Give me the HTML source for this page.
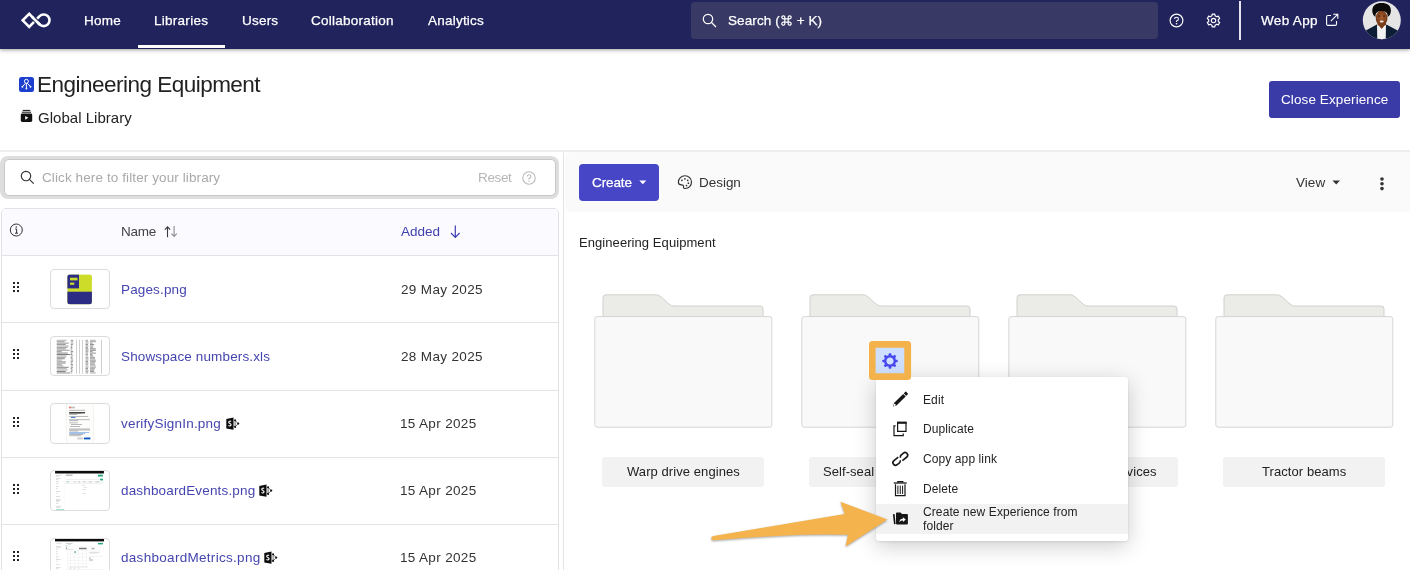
<!DOCTYPE html>
<html>
<head>
<meta charset="utf-8">
<title>Engineering Equipment</title>
<style>
*{box-sizing:border-box;margin:0;padding:0}
html,body{width:1410px;height:570px;overflow:hidden;background:#fff;-webkit-font-smoothing:antialiased;font-family:"Liberation Sans",sans-serif;color:#222}
.abs{position:absolute}
.t{position:absolute;white-space:nowrap;line-height:1;will-change:transform}
#nav{position:absolute;left:0;top:0;width:1410px;height:48.6px;background:#21245c;box-shadow:0 1px 4px rgba(0,0,0,.38)}
</style>
</head>
<body>
<div id="page" style="position:absolute;left:0;top:0;width:1410px;height:570px;overflow:hidden">
<!-- NAV -->
<div id="nav">
  <svg class="abs" style="left:18px;top:9px" width="36" height="22" viewBox="18 9 36 22"><g fill="none" stroke-width="2.6"><path d="M39.6 24.4 L29.2 13.9 L22.7 20.3 L29.2 26.8 L39.6 16.2 A5.8 5.8 0 1 1 39.6 24.4Z" stroke="#fff" stroke-linejoin="miter"/><path d="M33.6 18.4 L37.6 22.4" stroke="#21245c" stroke-width="4.6"/><path d="M40.2 25 L32 16.8" stroke="#fff"/></g></svg>
  <div class="abs" style="left:138px;top:45px;width:87px;height:3px;background:#fff"></div>
  <div class="abs" style="left:691px;top:2px;width:467px;height:37px;background:#393966;border-radius:4px"></div>
  <svg class="abs" style="left:702px;top:13px" width="15" height="15" viewBox="0 0 15 15"><circle cx="6" cy="6" r="4.7" fill="none" stroke="#fff" stroke-width="1.2"/><path d="M9.5 9.5 L14 14" stroke="#fff" stroke-width="1.2"/></svg>
  <svg class="abs" style="left:1168.7px;top:12.6px" width="15" height="15" viewBox="0 0 15 15"><circle cx="7.5" cy="7.5" r="6.4" fill="none" stroke="#fff" stroke-width="1.15"/><path d="M5.6 6.1 A1.9 1.9 0 1 1 7.5 8 V9" fill="none" stroke="#fff" stroke-width="1.1"/><circle cx="7.5" cy="10.8" r=".8" fill="#fff"/></svg>
  <svg class="abs" style="left:1206px;top:12.6px" width="15" height="15" viewBox="0 0 15 15"><path d="M9.10 2.87 L8.85 1.14 L6.15 1.14 L5.90 2.87 L4.29 3.80 L2.67 3.15 L1.32 5.49 L2.69 6.57 L2.69 8.43 L1.32 9.51 L2.67 11.85 L4.29 11.20 L5.90 12.13 L6.15 13.86 L8.85 13.86 L9.10 12.13 L10.71 11.20 L12.33 11.85 L13.68 9.51 L12.31 8.43 L12.31 6.57 L13.68 5.49 L12.33 3.15 L10.71 3.80Z" fill="none" stroke="#fff" stroke-width="1.15" stroke-linejoin="round"/><circle cx="7.5" cy="7.5" r="2.2" fill="none" stroke="#fff" stroke-width="1.15"/></svg>
  <div class="abs" style="left:1239.4px;top:1px;width:1.7px;height:38.5px;background:#e4e4ef"></div>
  <svg class="abs" style="left:1325.2px;top:13px" width="14" height="14" viewBox="0 0 14 14"><path d="M6 2.5 H3 Q1.6 2.5 1.6 3.9 V11 Q1.6 12.4 3 12.4 H10.1 Q11.5 12.4 11.5 11 V8" fill="none" stroke="#fff" stroke-width="1.1"/><path d="M5.8 8.2 L12.6 1.4 M8.2 1.2 H12.8 V5.8" fill="none" stroke="#fff" stroke-width="1.1"/></svg>
  <svg class="abs" style="left:1362px;top:0px" width="40" height="41" viewBox="1362 0 40 41"><defs><clipPath id="av"><circle cx="1381.8" cy="20.2" r="19"/></clipPath><radialGradient id="fg" cx=".5" cy=".45" r=".6"><stop offset="0" stop-color="#a85c2e"/><stop offset="1" stop-color="#6b3516"/></radialGradient></defs><g clip-path="url(#av)"><rect x="1362" y="0" width="40" height="41" fill="#e5e5e5"/><path d="M1377.6 22 H1386 V28 H1377.6Z" fill="#7a3d1a"/><ellipse cx="1381.6" cy="18" rx="5.9" ry="7.6" fill="url(#fg)"/><path d="M1372.3 11 C1372 5.5 1376 2.9 1381.6 2.9 C1387.2 2.9 1391.2 5.5 1390.9 11 C1390.8 13.8 1389.5 16 1387.6 17 C1388 13.5 1386.5 11 1381.6 11 C1376.7 11 1375.2 13.5 1375.6 17 C1373.7 16 1372.4 13.8 1372.3 11Z" fill="#0b0b0b"/><ellipse cx="1379.2" cy="16" rx="1.2" ry=".6" fill="#3a1a0c"/><ellipse cx="1384" cy="16" rx="1.2" ry=".6" fill="#3a1a0c"/><ellipse cx="1381.7" cy="21.4" rx="2" ry="1" fill="#f0e4de"/><path d="M1362 41 L1364 31.5 L1376.8 24.6 L1381.7 36 L1386.4 24.6 L1399.5 31.5 L1402 41Z" fill="#0e1d36"/><path d="M1377 25 L1379 25.8 L1381.7 28.5 L1384.2 25.8 L1386 25 L1385.7 41 L1377.3 41Z" fill="#f3f3f3"/><path d="M1379 25.5 L1381.7 29 L1384.3 25.5 L1384.3 24 H1379Z" fill="#7a3d1a"/></g></svg>
</div>
<div class="t" id="n6" style="left:728px;top:13.7px;font-size:13.5px;-webkit-text-stroke:.25px #fff;letter-spacing:.1px;color:#fff">Search (<svg width="11" height="11" viewBox="0 0 11 11" style="vertical-align:-1px;margin:0 1px"><path d="M3.8 3.8 H7.2 V7.2 H3.8Z M3.8 3.8 V2.6 A1.5 1.5 0 1 0 2.6 3.8Z M7.2 3.8 H8.4 A1.5 1.5 0 1 0 7.2 2.6Z M7.2 7.2 V8.4 A1.5 1.5 0 1 0 8.4 7.2Z M3.8 7.2 H2.6 A1.5 1.5 0 1 0 3.8 8.4Z" fill="none" stroke="#fff" stroke-width="1.2"/></svg> + K)</div>
<!-- HEADER -->
<div class="abs" style="left:19px;top:77px;width:15px;height:15px;background:#1c3fd0;border-radius:2.5px"></div>
<svg class="abs" style="left:19px;top:77px" width="15" height="15" viewBox="0 0 15 15"><g fill="none" stroke="#fff" stroke-width="1"><circle cx="7.4" cy="4.3" r="2"/><path d="M7.4 6.3 V11 M6.6 6.2 L3.6 9.4 M8.2 6.2 L11.3 9.4"/></g><g fill="#fff"><circle cx="3.4" cy="9.8" r=".95"/><circle cx="7.4" cy="11.6" r=".95"/><circle cx="11.5" cy="9.8" r=".95"/></g></svg>
<svg class="abs" style="left:20px;top:109px" width="13" height="14" viewBox="0 0 13 14"><path d="M2.8 1.4 H10.2 M1.9 3.2 H11.1" stroke="#111" stroke-width="1"/><rect x=".8" y="4.6" width="11.4" height="8.4" rx="1.4" fill="#111"/><path d="M5.2 6.9 L8.3 8.8 L5.2 10.7Z" fill="#fff"/></svg>
<div class="abs" style="left:1269px;top:81px;width:131px;height:37px;background:#3b3ba8;border-radius:3px"></div>
<div class="abs" style="left:0;top:150px;width:1410px;height:2px;background:#eee"></div>
<!-- LEFT PANEL -->
<div class="abs" style="left:563.2px;top:152px;width:1.3px;height:418px;background:#e4e4e4"></div>
<div class="abs" style="left:0px;top:156px;width:559.4px;height:43.2px;background:#dedede;border-radius:8px"></div>
<div class="abs" style="left:4.2px;top:159.3px;width:551.6px;height:36.4px;background:#fff;border:1px solid #c8c8c8;border-radius:5px"></div>
<svg class="abs" style="left:20px;top:170px" width="15" height="15" viewBox="0 0 15 15"><circle cx="6" cy="6" r="4.7" fill="none" stroke="#333" stroke-width="1.15"/><path d="M9.4 9.4 L13.7 13.7" stroke="#333" stroke-width="1.15"/></svg>
<svg class="abs" style="left:522px;top:171px" width="14" height="14" viewBox="0 0 14 14"><circle cx="7" cy="7" r="6.2" fill="none" stroke="#b9b9b9" stroke-width="1.1"/><path d="M5.2 5.6 A1.8 1.8 0 1 1 7 7.4 V8.4" fill="none" stroke="#b9b9b9" stroke-width="1.1"/><circle cx="7" cy="10.2" r=".7" fill="#b9b9b9"/></svg>
<div class="abs" id="tbl" style="left:1px;top:208px;width:558px;height:370px;border:1px solid #e2e2e6;border-radius:5px 5px 0 0;background:#fff;overflow:hidden">
  <div class="abs" style="left:0;top:0;width:557px;height:47px;background:#fafaff;border-bottom:1px solid #e2e2e6"></div>
  <div class="abs" style="left:0;top:113px;width:557px;height:1px;background:#e4e4e4"></div>
  <div class="abs" style="left:0;top:181px;width:557px;height:1px;background:#e4e4e4"></div>
  <div class="abs" style="left:0;top:248px;width:557px;height:1px;background:#e4e4e4"></div>
  <div class="abs" style="left:0;top:315px;width:557px;height:1px;background:#e4e4e4"></div>
</div>
<svg class="abs" style="left:8.8px;top:222.5px" width="15" height="15" viewBox="0 0 15 15"><circle cx="7.3" cy="7" r="6" fill="none" stroke="#333" stroke-width="1"/><path d="M6.2 6 H7.6 V10 M6 10.2 H9" fill="none" stroke="#333" stroke-width="1"/><circle cx="7.3" cy="4" r=".8" fill="#333"/></svg>
<svg class="abs" style="left:160px;top:222px" width="22" height="20" viewBox="160 222 22 20"><path d="M167.5 237.2 V227.6" stroke="#3a3a3a" stroke-width="1.1"/><path d="M164.9 229.7 L167.5 226.9 L170.1 229.7" fill="none" stroke="#3a3a3a" stroke-width="1.1"/><path d="M174.1 226.1 V235.8" stroke="#8c8c8c" stroke-width="1.1"/><path d="M171.4 233.7 L174.1 236.5 L176.8 233.7" fill="none" stroke="#8c8c8c" stroke-width="1.1"/></svg>
<svg class="abs" style="left:449px;top:224px" width="13" height="15" viewBox="0 0 13 15"><path d="M6.3 1.5 V13 M2 9 L6.3 13.4 L10.6 9" fill="none" stroke="#3f3fb0" stroke-width="1.2"/></svg>
<svg class="abs" style="left:13.2px;top:282px" width="6" height="10" viewBox="0 0 6 10" fill="#222"><rect x="0" y="0" width="2" height="2"/><rect x="0" y="4" width="2" height="2"/><rect x="0" y="8" width="2" height="2"/><rect x="4" y="0" width="2" height="2"/><rect x="4" y="4" width="2" height="2"/><rect x="4" y="8" width="2" height="2"/></svg>
<div class="abs" id="th0" style="left:50px;top:268.7px;width:59.6px;height:40.6px;border:1px solid #dcdcdc;border-radius:4px;background:#fff;overflow:hidden"><svg width="60" height="41" viewBox="50 268.7 60 41" style="position:absolute;left:-1px;top:-1px"><defs><clipPath id="pg"><rect x="67.4" y="274.2" width="24.5" height="29.7" rx="2.2"/></clipPath></defs><g clip-path="url(#pg)"><rect x="67" y="274" width="26" height="31" fill="#cddc29"/><rect x="67" y="274" width="12" height="14.1" fill="#2c2c84"/><rect x="67" y="291.4" width="26" height="13" fill="#2c2c84"/><rect x="70" y="277.4" width="7.5" height="2.7" fill="#cddc29"/><rect x="70" y="282.3" width="4.3" height="2.2" fill="#cddc29"/></g></svg></div>
<svg class="abs" style="left:13.2px;top:349.2px" width="6" height="10" viewBox="0 0 6 10" fill="#222"><rect x="0" y="0" width="2" height="2"/><rect x="0" y="4" width="2" height="2"/><rect x="0" y="8" width="2" height="2"/><rect x="4" y="0" width="2" height="2"/><rect x="4" y="4" width="2" height="2"/><rect x="4" y="8" width="2" height="2"/></svg>
<div class="abs" id="th1" style="left:50px;top:335.9px;width:59.6px;height:40.6px;border:1px solid #dcdcdc;border-radius:4px;background:#fff;overflow:hidden"><svg width="60" height="41" viewBox="50 335.9 60 41" style="position:absolute;left:-1px;top:-1px"><rect x="56.7" y="339.70" width="10" height="1.0" fill="#000" opacity="0.31"/><rect x="70.7" y="339.70" width="2.6" height="1.0" fill="#000" opacity="0.41"/><rect x="85.5" y="339.70" width="2.5" height="1.0" fill="#000" opacity="0.37"/><rect x="90" y="339.70" width="5.8" height="1.0" fill="#000" opacity="0.31"/><rect x="56.7" y="341.12" width="8" height="1.0" fill="#000" opacity="0.39"/><rect x="70.7" y="341.12" width="2.6" height="1.0" fill="#000" opacity="0.31"/><rect x="85.5" y="341.12" width="2.9" height="1.0" fill="#000" opacity="0.32"/><rect x="90" y="341.12" width="5.8" height="1.0" fill="#000" opacity="0.38"/><rect x="56.7" y="342.54" width="12" height="1.0" fill="#000" opacity="0.42"/><rect x="70.7" y="342.54" width="2.6" height="1.0" fill="#000" opacity="0.31"/><rect x="85.5" y="342.54" width="2.9" height="1.0" fill="#000" opacity="0.34"/><rect x="90" y="342.54" width="2.6" height="1.0" fill="#000" opacity="0.41"/><rect x="56.7" y="343.96" width="9" height="1.0" fill="#000" opacity="0.41"/><rect x="70.7" y="343.96" width="2.2" height="1.0" fill="#000" opacity="0.41"/><rect x="85.5" y="343.96" width="2.5" height="1.0" fill="#000" opacity="0.41"/><rect x="90" y="343.96" width="4.2" height="1.0" fill="#000" opacity="0.44"/><rect x="56.7" y="345.38" width="12" height="1.0" fill="#000" opacity="0.32"/><rect x="70.7" y="345.38" width="1.6" height="1.0" fill="#000" opacity="0.44"/><rect x="85.5" y="345.38" width="2.9" height="1.0" fill="#000" opacity="0.41"/><rect x="90" y="345.38" width="3.2" height="1.0" fill="#000" opacity="0.42"/><rect x="56.7" y="346.80" width="11" height="1.0" fill="#000" opacity="0.39"/><rect x="70.7" y="346.80" width="1.6" height="1.0" fill="#000" opacity="0.48"/><rect x="85.5" y="346.80" width="2.5" height="1.0" fill="#000" opacity="0.37"/><rect x="90" y="346.80" width="3.2" height="1.0" fill="#000" opacity="0.35"/><rect x="56.7" y="348.22" width="9" height="1.0" fill="#000" opacity="0.41"/><rect x="70.7" y="348.22" width="1.6" height="1.0" fill="#000" opacity="0.41"/><rect x="85.5" y="348.22" width="2.9" height="1.0" fill="#000" opacity="0.48"/><rect x="90" y="348.22" width="5.8" height="1.0" fill="#000" opacity="0.45"/><rect x="56.7" y="349.64" width="13" height="1.0" fill="#000" opacity="0.40"/><rect x="70.7" y="349.64" width="1.6" height="1.0" fill="#000" opacity="0.33"/><rect x="85.5" y="349.64" width="2.9" height="1.0" fill="#000" opacity="0.37"/><rect x="90" y="349.64" width="5.8" height="1.0" fill="#000" opacity="0.49"/><rect x="56.7" y="351.06" width="5" height="1.0" fill="#000" opacity="0.41"/><rect x="70.7" y="351.06" width="2.6" height="1.0" fill="#000" opacity="0.48"/><rect x="85.5" y="351.06" width="2.9" height="1.0" fill="#000" opacity="0.36"/><rect x="90" y="351.06" width="2.6" height="1.0" fill="#000" opacity="0.44"/><rect x="56.7" y="352.48" width="11" height="1.0" fill="#000" opacity="0.47"/><rect x="70.7" y="352.48" width="1.6" height="1.0" fill="#000" opacity="0.49"/><rect x="85.5" y="352.48" width="2.5" height="1.0" fill="#000" opacity="0.39"/><rect x="90" y="352.48" width="5.8" height="1.0" fill="#000" opacity="0.43"/><rect x="56.7" y="353.90" width="13.4" height="1.0" fill="#000" opacity="0.50"/><rect x="70.7" y="353.90" width="1.6" height="1.0" fill="#000" opacity="0.46"/><rect x="85.5" y="353.90" width="2.5" height="1.0" fill="#000" opacity="0.36"/><rect x="90" y="353.90" width="2.6" height="1.0" fill="#000" opacity="0.38"/><rect x="56.7" y="355.32" width="10" height="1.0" fill="#000" opacity="0.33"/><rect x="70.7" y="355.32" width="2.6" height="1.0" fill="#000" opacity="0.32"/><rect x="85.5" y="355.32" width="2.5" height="1.0" fill="#000" opacity="0.31"/><rect x="90" y="355.32" width="3.2" height="1.0" fill="#000" opacity="0.45"/><rect x="56.7" y="356.74" width="9" height="1.0" fill="#000" opacity="0.38"/><rect x="70.7" y="356.74" width="1.6" height="1.0" fill="#000" opacity="0.47"/><rect x="85.5" y="356.74" width="2.9" height="1.0" fill="#000" opacity="0.32"/><rect x="90" y="356.74" width="5" height="1.0" fill="#000" opacity="0.39"/><rect x="56.7" y="358.16" width="8" height="1.0" fill="#000" opacity="0.47"/><rect x="70.7" y="358.16" width="2.2" height="1.0" fill="#000" opacity="0.36"/><rect x="85.5" y="358.16" width="2.9" height="1.0" fill="#000" opacity="0.38"/><rect x="90" y="358.16" width="5" height="1.0" fill="#000" opacity="0.37"/><rect x="56.7" y="359.58" width="5" height="1.0" fill="#000" opacity="0.34"/><rect x="70.7" y="359.58" width="2.6" height="1.0" fill="#000" opacity="0.35"/><rect x="85.5" y="359.58" width="2.9" height="1.0" fill="#000" opacity="0.35"/><rect x="90" y="359.58" width="5.8" height="1.0" fill="#000" opacity="0.40"/><rect x="56.7" y="361.00" width="9" height="1.0" fill="#000" opacity="0.33"/><rect x="70.7" y="361.00" width="2.2" height="1.0" fill="#000" opacity="0.41"/><rect x="85.5" y="361.00" width="2.5" height="1.0" fill="#000" opacity="0.42"/><rect x="90" y="361.00" width="5.8" height="1.0" fill="#000" opacity="0.36"/><rect x="56.7" y="362.42" width="9" height="1.0" fill="#000" opacity="0.48"/><rect x="70.7" y="362.42" width="1.6" height="1.0" fill="#000" opacity="0.46"/><rect x="85.5" y="362.42" width="2.9" height="1.0" fill="#000" opacity="0.47"/><rect x="90" y="362.42" width="5" height="1.0" fill="#000" opacity="0.46"/><rect x="56.7" y="363.84" width="5" height="1.0" fill="#000" opacity="0.32"/><rect x="70.7" y="363.84" width="2.2" height="1.0" fill="#000" opacity="0.43"/><rect x="85.5" y="363.84" width="2.5" height="1.0" fill="#000" opacity="0.31"/><rect x="90" y="363.84" width="5" height="1.0" fill="#000" opacity="0.31"/><rect x="56.7" y="365.26" width="6.5" height="1.0" fill="#000" opacity="0.37"/><rect x="70.7" y="365.26" width="2.2" height="1.0" fill="#000" opacity="0.31"/><rect x="85.5" y="365.26" width="2.9" height="1.0" fill="#000" opacity="0.30"/><rect x="90" y="365.26" width="5.8" height="1.0" fill="#000" opacity="0.33"/><rect x="56.7" y="366.68" width="12" height="1.0" fill="#000" opacity="0.47"/><rect x="70.7" y="366.68" width="2.2" height="1.0" fill="#000" opacity="0.42"/><rect x="85.5" y="366.68" width="2.9" height="1.0" fill="#000" opacity="0.33"/><rect x="90" y="366.68" width="5.8" height="1.0" fill="#000" opacity="0.35"/><rect x="56.7" y="368.10" width="10" height="1.0" fill="#000" opacity="0.32"/><rect x="70.7" y="368.10" width="1.6" height="1.0" fill="#000" opacity="0.47"/><rect x="85.5" y="368.10" width="2.5" height="1.0" fill="#000" opacity="0.50"/><rect x="90" y="368.10" width="5" height="1.0" fill="#000" opacity="0.39"/><rect x="56.7" y="369.52" width="11" height="1.0" fill="#000" opacity="0.32"/><rect x="70.7" y="369.52" width="2.2" height="1.0" fill="#000" opacity="0.37"/><rect x="85.5" y="369.52" width="2.9" height="1.0" fill="#000" opacity="0.35"/><rect x="90" y="369.52" width="4.2" height="1.0" fill="#000" opacity="0.47"/><rect x="56.7" y="370.94" width="9" height="1.0" fill="#000" opacity="0.49"/><rect x="70.7" y="370.94" width="1.6" height="1.0" fill="#000" opacity="0.41"/><rect x="85.5" y="370.94" width="2.9" height="1.0" fill="#000" opacity="0.33"/><rect x="90" y="370.94" width="4.2" height="1.0" fill="#000" opacity="0.41"/><rect x="56.7" y="372.36" width="13.4" height="1.0" fill="#000" opacity="0.44"/><rect x="70.7" y="372.36" width="1.6" height="1.0" fill="#000" opacity="0.35"/><rect x="85.5" y="372.36" width="2.5" height="1.0" fill="#000" opacity="0.37"/><rect x="90" y="372.36" width="5.8" height="1.0" fill="#000" opacity="0.33"/><rect x="76.4" y="339.6" width="0.6" height="34.2" fill="#b0b0b0"/><rect x="79.2" y="339.6" width="0.6" height="34.2" fill="#b0b0b0"/><rect x="82.1" y="339.6" width="0.6" height="34.2" fill="#b0b0b0"/><rect x="101.4" y="339.6" width="0.6" height="34.2" fill="#b0b0b0"/></svg></div>
<svg class="abs" style="left:13.2px;top:416.6px" width="6" height="10" viewBox="0 0 6 10" fill="#222"><rect x="0" y="0" width="2" height="2"/><rect x="0" y="4" width="2" height="2"/><rect x="0" y="8" width="2" height="2"/><rect x="4" y="0" width="2" height="2"/><rect x="4" y="4" width="2" height="2"/><rect x="4" y="8" width="2" height="2"/></svg>
<div class="abs" id="th2" style="left:50px;top:403.1px;width:59.6px;height:40.6px;border:1px solid #dcdcdc;border-radius:4px;background:#fff;overflow:hidden"><svg width="60" height="41" viewBox="50 403.1 60 41" style="position:absolute;left:-1px;top:-1px"><rect x="66.2" y="403.1" width="27.2" height="41" fill="#fdfdfc" stroke="#ecebe6" stroke-width=".6"/><rect x="69.2" y="406.8" width="1.6" height="1.6" fill="#e3572b"/><rect x="70.9" y="406.8" width="4" height="1.6" fill="#bdbdbd"/><rect x="69.2" y="410" width="15.8" height="0.6" fill="#8c8c8c"/><rect x="69.2" y="412.4" width="15.8" height="0.6" fill="#8c8c8c"/><rect x="69.2" y="413.2" width="12" height="0.6" fill="#8c8c8c"/><rect x="69.2" y="414.5" width="8" height="0.6" fill="#8c8c8c"/><rect x="69.2" y="416.2" width="19" height="0.6" fill="#8c8c8c"/><rect x="69.2" y="419.6" width="20.8" height="0.6" fill="#8c8c8c"/><rect x="69.2" y="420.6" width="9" height="0.6" fill="#8c8c8c"/><rect x="69.2" y="422.7" width="8.5" height="0.6" fill="#8c8c8c"/><rect x="71" y="424.4" width="11" height="0.6" fill="#8c8c8c"/><rect x="70" y="426.2" width="10" height="0.6" fill="#8c8c8c"/><rect x="69.2" y="428.8" width="20.8" height="0.6" fill="#8c8c8c"/><rect x="69.2" y="429.8" width="20.8" height="0.6" fill="#8c8c8c"/><rect x="69.2" y="430.8" width="9" height="0.6" fill="#8c8c8c"/><rect x="69.2" y="434.4" width="14" height="0.6" fill="#8c8c8c"/><rect x="69.2" y="435.6" width="12" height="0.6" fill="#8c8c8c"/><rect x="69.2" y="412.2" width="15.8" height="1.3" fill="#3a3a3a"/><rect x="71" y="417.2" width="4.5" height=".9" fill="#2f6fd0"/><rect x="69.2" y="432.4" width="20" height=".7" fill="#7aa6e0"/><rect x="69.2" y="433.4" width="16" height=".7" fill="#7aa6e0"/><rect x="77.2" y="437.6" width="5.9" height="1.9" fill="#cfcfcf"/><rect x="84" y="437.6" width="6.4" height="1.9" fill="#0b5cc2"/></svg></div>
<svg class="abs" style="left:13.2px;top:483.6px" width="6" height="10" viewBox="0 0 6 10" fill="#222"><rect x="0" y="0" width="2" height="2"/><rect x="0" y="4" width="2" height="2"/><rect x="0" y="8" width="2" height="2"/><rect x="4" y="0" width="2" height="2"/><rect x="4" y="4" width="2" height="2"/><rect x="4" y="8" width="2" height="2"/></svg>
<div class="abs" id="th3" style="left:50px;top:470.3px;width:59.6px;height:40.6px;border:1px solid #dcdcdc;border-radius:4px;background:#fff;overflow:hidden"><svg width="60" height="41" viewBox="50 470.3 60 41" style="position:absolute;left:-1px;top:-1px"><rect x="55.1" y="471.1" width="48.8" height="2.7" fill="#0d0d0d"/><rect x="56" y="475.2" width="5.6" height="0.6" fill="#c9c9c9"/><rect x="56" y="476.1" width="3" height="0.6" fill="#c9c9c9"/><rect x="56" y="478.4" width="4.8" height="0.6" fill="#c9c9c9"/><rect x="56" y="479.4" width="2" height="0.6" fill="#c9c9c9"/><rect x="56" y="481.3" width="3" height="0.6" fill="#c9c9c9"/><rect x="56" y="483.3" width="2" height="0.6" fill="#c9c9c9"/><rect x="56" y="486.4" width="2.6" height="0.6" fill="#c9c9c9"/><rect x="56" y="488.2" width="2" height="0.6" fill="#c9c9c9"/><rect x="56" y="491.3" width="4.6" height="0.6" fill="#c9c9c9"/><rect x="56" y="493.2" width="1.5" height="0.6" fill="#c9c9c9"/><rect x="56" y="496.3" width="3.8" height="0.6" fill="#c9c9c9"/><rect x="56" y="499.5" width="4.7" height="0.6" fill="#c9c9c9"/><rect x="56" y="500.6" width="4.4" height="0.6" fill="#c9c9c9"/><rect x="56" y="501.6" width="3" height="0.6" fill="#c9c9c9"/><rect x="56" y="503.4" width="2.6" height="0.6" fill="#c9c9c9"/><rect x="56" y="506.2" width="5.5" height="0.6" fill="#c9c9c9"/><rect x="56" y="507.4" width="4" height="0.6" fill="#c9c9c9"/><rect x="64.6" y="473.8" width=".3" height="36.8" fill="#f0f0f0"/><rect x="66" y="475" width="6.5" height=".9" fill="#9a9a9a"/><rect x="98" y="475" width="4.9" height="1.8" fill="#27a87a"/><rect x="100.1" y="479" width="2.9" height="1.7" fill="#27a87a"/><rect x="66" y="479.5" width="33" height=".5" fill="#dedede"/><rect x="65" y="481.6" width="38.5" height="1.1" fill="#eef2f1"/><rect x="65" y="483.3" width="38.5" height=".4" fill="#dcdcdc"/><rect x="66.5" y="481.9" width="2.6" height=".6" fill="#6cc3a4"/><rect x="74" y="481.9" width="1.4" height="0.6" fill="#aaa"/><rect x="78" y="481.9" width="1.8" height="0.6" fill="#aaa"/><rect x="83" y="481.9" width="2.4" height="0.6" fill="#aaa"/><rect x="89" y="481.9" width="2.6" height="0.6" fill="#aaa"/><rect x="95.5" y="481.9" width="3.6" height="0.6" fill="#aaa"/><rect x="82" y="485.6" width="3.6" height="0.6" fill="#d4d4d4"/><rect x="83.5" y="487.6" width="3.6" height="0.6" fill="#d4d4d4"/><rect x="82.5" y="489.4" width="3.4" height="0.6" fill="#d4d4d4"/><rect x="82.4" y="493.3" width="3.6" height="0.6" fill="#d4d4d4"/><rect x="56" y="509.3" width="8" height=".8" fill="#8fd9bf"/></svg></div>
<svg class="abs" style="left:13.2px;top:550.8px" width="6" height="10" viewBox="0 0 6 10" fill="#222"><rect x="0" y="0" width="2" height="2"/><rect x="0" y="4" width="2" height="2"/><rect x="0" y="8" width="2" height="2"/><rect x="4" y="0" width="2" height="2"/><rect x="4" y="4" width="2" height="2"/><rect x="4" y="8" width="2" height="2"/></svg>
<div class="abs" id="th4" style="left:50px;top:537.5px;width:59.6px;height:40.6px;border:1px solid #dcdcdc;border-radius:4px;background:#fff;overflow:hidden"><svg width="60" height="41" viewBox="50 537.5 60 41" style="position:absolute;left:-1px;top:-1px"><rect x="55" y="538.3" width="49" height="2.6" fill="#0d0d0d"/><rect x="56" y="542.4" width="5.8" height="0.6" fill="#c9c9c9"/><rect x="56" y="545.4" width="4.8" height="0.6" fill="#c9c9c9"/><rect x="56" y="546.4" width="4.8" height="0.6" fill="#c9c9c9"/><rect x="56" y="548.2" width="2.2" height="0.6" fill="#c9c9c9"/><rect x="56" y="550.4" width="1.8" height="0.6" fill="#c9c9c9"/><rect x="56" y="552.5" width="2" height="0.6" fill="#c9c9c9"/><rect x="56" y="555.3" width="2.6" height="0.6" fill="#c9c9c9"/><rect x="56" y="557.2" width="1.5" height="0.6" fill="#c9c9c9"/><rect x="56" y="558.5" width="4.6" height="0.6" fill="#c9c9c9"/><rect x="56" y="560.4" width="1.4" height="0.6" fill="#c9c9c9"/><rect x="56" y="563.4" width="3.6" height="0.6" fill="#c9c9c9"/><rect x="56" y="566.9" width="4.6" height="0.6" fill="#c9c9c9"/><rect x="56" y="568" width="2.6" height="0.6" fill="#c9c9c9"/><rect x="66" y="542.6" width="6.6" height=".7" fill="#bdbdbd"/><rect x="68" y="543.6" width="3" height=".6" fill="#cfcfcf"/><rect x="98" y="542.4" width="5" height="1.5" fill="#27a87a"/><rect x="65.6" y="545.2" width="1.8" height=".6" fill="#6cc3a4"/><rect x="65.2" y="546.4" width="38.2" height="3.2" fill="none" stroke="#e9e9e9" stroke-width=".35"/><rect x="66.3" y="547.2" width=".8" height="1.2" fill="#555"/><rect x="66.5" y="548.8" width="6.5" height=".5" fill="#cfcfcf"/><rect x="79" y="547.3" width="7.6" height="1" fill="#5a5a5a"/><rect x="79" y="548.6" width="7.6" height=".5" fill="#bbb"/><rect x="91.6" y="547.4" width="3" height=".8" fill="#888"/><rect x="91.6" y="548.6" width="2.6" height=".5" fill="#ccc"/><rect x="74" y="551" width="2.1" height="1.1" fill="#27a87a"/><rect x="67.5" y="550" width=".3" height="16" fill="#e4e4e4"/><rect x="70.3" y="550" width=".3" height="16" fill="#e4e4e4"/><rect x="74.4" y="550" width=".3" height="16" fill="#e4e4e4"/><rect x="78.3" y="550" width=".3" height="16" fill="#e4e4e4"/><rect x="82.4" y="550" width=".3" height="16" fill="#e4e4e4"/><rect x="86.4" y="550" width=".3" height="16" fill="#e4e4e4"/><rect x="67.5" y="553.3" width="19.5" height=".3" fill="#e4e4e4"/><rect x="67.5" y="556.4" width="19.5" height=".3" fill="#e4e4e4"/><rect x="67.5" y="559.5" width="19.5" height=".3" fill="#e4e4e4"/><rect x="67.5" y="562.5" width="19.5" height=".3" fill="#e4e4e4"/><rect x="67.5" y="565.6" width="19.5" height=".3" fill="#e4e4e4"/><rect x="89" y="551.4" width="10.6" height=".5" fill="#b9b9b9"/><rect x="89.6" y="552.4" width="8" height=".5" fill="#d8d8d8"/><rect x="89" y="555.4" width="14" height=".4" fill="#dedede"/><rect x="89.2" y="557.2" width="1.4" height=".8" fill="#777"/><rect x="89.2" y="558.5" width="3.8" height=".6" fill="#b9b9b9"/><rect x="89.2" y="559.5" width="3.8" height=".6" fill="#b9b9b9"/><rect x="69" y="566.3" width="19" height=".5" fill="#d8d8d8"/><rect x="70.2" y="567.3" width=".9" height=".7" fill="#9a8fd6"/><rect x="74.2" y="567.3" width=".9" height=".7" fill="#b48ad0"/><rect x="78.4" y="567.3" width=".9" height=".7" fill="#e6a0bf"/><rect x="65.5" y="568.6" width="38" height=".4" fill="#e2e2e2"/></svg></div>
<svg class="abs" style="left:225.5px;top:417px" width="14" height="13" viewBox="0 0 14 13"><path d="M0.3 1.9 L7.5 0.4 V12.7 L0.3 11.5Z" fill="#0c0c0c"/><path d="M5.1 4.5 C4.2 3.7 2.7 4.1 2.7 5.2 C2.7 6.6 5.1 6.3 5.1 7.8 C5.1 9 3.4 9.3 2.5 8.4" fill="none" stroke="#fff" stroke-width="1.05"/><path d="M9.1 3.3 L12.2 6.6 L9.1 9.9Z" fill="none" stroke="#111" stroke-width=".6"/><circle cx="9.1" cy="3.3" r="1.05" fill="#111"/><circle cx="9.1" cy="9.9" r="1.05" fill="#111"/><circle cx="12.2" cy="6.6" r="1.1" fill="#111"/></svg>
<svg class="abs" style="left:259px;top:484.1px" width="14" height="13" viewBox="0 0 14 13"><path d="M0.3 1.9 L7.5 0.4 V12.7 L0.3 11.5Z" fill="#0c0c0c"/><path d="M5.1 4.5 C4.2 3.7 2.7 4.1 2.7 5.2 C2.7 6.6 5.1 6.3 5.1 7.8 C5.1 9 3.4 9.3 2.5 8.4" fill="none" stroke="#fff" stroke-width="1.05"/><path d="M9.1 3.3 L12.2 6.6 L9.1 9.9Z" fill="none" stroke="#111" stroke-width=".6"/><circle cx="9.1" cy="3.3" r="1.05" fill="#111"/><circle cx="9.1" cy="9.9" r="1.05" fill="#111"/><circle cx="12.2" cy="6.6" r="1.1" fill="#111"/></svg>
<svg class="abs" style="left:264px;top:551px" width="14" height="13" viewBox="0 0 14 13"><path d="M0.3 1.9 L7.5 0.4 V12.7 L0.3 11.5Z" fill="#0c0c0c"/><path d="M5.1 4.5 C4.2 3.7 2.7 4.1 2.7 5.2 C2.7 6.6 5.1 6.3 5.1 7.8 C5.1 9 3.4 9.3 2.5 8.4" fill="none" stroke="#fff" stroke-width="1.05"/><path d="M9.1 3.3 L12.2 6.6 L9.1 9.9Z" fill="none" stroke="#111" stroke-width=".6"/><circle cx="9.1" cy="3.3" r="1.05" fill="#111"/><circle cx="9.1" cy="9.9" r="1.05" fill="#111"/><circle cx="12.2" cy="6.6" r="1.1" fill="#111"/></svg>
<!-- RIGHT PANEL -->
<div class="abs" style="left:565.3px;top:152px;width:845px;height:60.2px;background:#fafafa;border-radius:7px 0 0 7px"></div>
<div class="abs" style="left:579px;top:163.5px;width:80px;height:37px;background:#4646c6;border-radius:4px"></div>
<svg class="abs" style="left:639px;top:180px" width="8" height="5" viewBox="0 0 8 5"><path d="M0.3 0.5 H7.3 L3.8 4.2Z" fill="#fff"/></svg>
<svg class="abs" style="left:676px;top:173px" width="18" height="18" viewBox="676 173 18 18"><path d="M685 175.7 C681.2 175.7 678.4 178.6 678.4 182.2 C678.4 184.2 680 184.9 681.6 184.9 C683.2 184.9 683.7 185.8 683.5 186.8 C683.3 188 684 188.5 685.2 188.5 C688.9 188.5 691.5 185.6 691.5 182.1 C691.5 178.5 688.7 175.7 685 175.7Z" fill="none" stroke="#333" stroke-width="1.15"/><g fill="#333"><circle cx="681.9" cy="180.3" r=".85"/><circle cx="684.9" cy="178.8" r=".85"/><circle cx="687.7" cy="180.3" r=".85"/><circle cx="688.4" cy="183.2" r=".85"/><circle cx="686.5" cy="185.6" r=".85"/></g></svg>
<svg class="abs" style="left:1332px;top:180px" width="9" height="5" viewBox="0 0 9 5"><path d="M0.5 0.5 H8 L4.2 4.4Z" fill="#333"/></svg>
<svg class="abs" style="left:1379px;top:177px" width="6" height="14" viewBox="0 0 6 14" fill="#333"><circle cx="3" cy="2" r="1.8"/><circle cx="3" cy="6.8" r="1.8"/><circle cx="3" cy="11.6" r="1.8"/></svg>
<svg class="abs" style="left:594.0px;top:293px" width="179" height="136" viewBox="0 0 179 136"><path d="M9 24 V4.8 Q9 1.8 12 1.8 H62 Q64.8 1.8 67 3.8 L75.2 11.2 Q77.2 13 80 13 H166 Q169 13 169 16 V24Z" fill="#ebebe8" stroke="#d0d0cd" stroke-width="1"/><rect x="0.8" y="23.6" width="177" height="110.6" rx="2.5" fill="#f9f9f9" stroke="#d6d6d6" stroke-width="1"/></svg>
<div class="abs" style="left:601.6px;top:457px;width:162.6px;height:30px;background:#f2f2f2;border-radius:3px"></div>
<svg class="abs" style="left:801.1px;top:293px" width="179" height="136" viewBox="0 0 179 136"><path d="M9 24 V4.8 Q9 1.8 12 1.8 H62 Q64.8 1.8 67 3.8 L75.2 11.2 Q77.2 13 80 13 H166 Q169 13 169 16 V24Z" fill="#ebebe8" stroke="#d0d0cd" stroke-width="1"/><rect x="0.8" y="23.6" width="177" height="110.6" rx="2.5" fill="#f9f9f9" stroke="#d6d6d6" stroke-width="1"/></svg>
<div class="abs" style="left:808.7px;top:457px;width:162.6px;height:30px;background:#f2f2f2;border-radius:3px"></div>
<svg class="abs" style="left:1008.2px;top:293px" width="179" height="136" viewBox="0 0 179 136"><path d="M9 24 V4.8 Q9 1.8 12 1.8 H62 Q64.8 1.8 67 3.8 L75.2 11.2 Q77.2 13 80 13 H166 Q169 13 169 16 V24Z" fill="#ebebe8" stroke="#d0d0cd" stroke-width="1"/><rect x="0.8" y="23.6" width="177" height="110.6" rx="2.5" fill="#f9f9f9" stroke="#d6d6d6" stroke-width="1"/></svg>
<div class="abs" style="left:1015.8px;top:457px;width:162.6px;height:30px;background:#f2f2f2;border-radius:3px"></div>
<svg class="abs" style="left:1215.3px;top:293px" width="179" height="136" viewBox="0 0 179 136"><path d="M9 24 V4.8 Q9 1.8 12 1.8 H62 Q64.8 1.8 67 3.8 L75.2 11.2 Q77.2 13 80 13 H166 Q169 13 169 16 V24Z" fill="#ebebe8" stroke="#d0d0cd" stroke-width="1"/><rect x="0.8" y="23.6" width="177" height="110.6" rx="2.5" fill="#f9f9f9" stroke="#d6d6d6" stroke-width="1"/></svg>
<div class="abs" style="left:1222.9px;top:457px;width:162.6px;height:30px;background:#f2f2f2;border-radius:3px"></div>
<!-- gear button -->
<div class="abs" style="left:874px;top:346px;width:32px;height:29px;background:#cfe0ff"></div>
<svg class="abs" style="left:879.8px;top:350.9px" width="20" height="20" viewBox="-10 -10 20 20"><g fill="#4949f0"><circle r="4.85" fill="none" stroke="#4949f0" stroke-width="2.5"/><rect x="-1.35" y="-7.8" width="2.7" height="3" rx="1" transform="rotate(0)"/><rect x="-1.35" y="-7.8" width="2.7" height="3" rx="1" transform="rotate(45)"/><rect x="-1.35" y="-7.8" width="2.7" height="3" rx="1" transform="rotate(90)"/><rect x="-1.35" y="-7.8" width="2.7" height="3" rx="1" transform="rotate(135)"/><rect x="-1.35" y="-7.8" width="2.7" height="3" rx="1" transform="rotate(180)"/><rect x="-1.35" y="-7.8" width="2.7" height="3" rx="1" transform="rotate(225)"/><rect x="-1.35" y="-7.8" width="2.7" height="3" rx="1" transform="rotate(270)"/><rect x="-1.35" y="-7.8" width="2.7" height="3" rx="1" transform="rotate(315)"/></g></svg>
<div class="t" id="n1" style="left:84.30px;top:14.10px;font-size:13.5px;color:#fff;-webkit-text-stroke:.25px #fff;letter-spacing:0.233px;">Home</div>
<div class="t" id="n2" style="left:154.00px;top:14.10px;font-size:13.5px;color:#fff;-webkit-text-stroke:.25px #fff;letter-spacing:0.269px;">Libraries</div>
<div class="t" id="n3" style="left:241.60px;top:14.10px;font-size:13.5px;color:#fff;-webkit-text-stroke:.25px #fff;letter-spacing:0.212px;">Users</div>
<div class="t" id="n4" style="left:311.20px;top:14.10px;font-size:13.5px;color:#fff;-webkit-text-stroke:.25px #fff;letter-spacing:0.254px;">Collaboration</div>
<div class="t" id="n5" style="left:428.00px;top:14.10px;font-size:13.5px;color:#fff;-webkit-text-stroke:.25px #fff;letter-spacing:0.225px;">Analytics</div>
<div class="t" id="n7" style="left:1261.00px;top:14.10px;font-size:13.5px;color:#fff;-webkit-text-stroke:.25px #fff;letter-spacing:0.333px;">Web App</div>
<div class="t" id="h1" style="left:37.45px;top:74.20px;font-size:22.5px;color:#222;letter-spacing:-0.515px;">Engineering Equipment</div>
<div class="t" id="h2" style="left:38.05px;top:109.80px;font-size:15px;color:#222;letter-spacing:0.023px;">Global Library</div>
<div class="t" id="h3" style="left:1281.15px;top:93.40px;font-size:13.5px;color:#fff;letter-spacing:0.100px;">Close Experience</div>
<div class="t" id="s1" style="left:42.45px;top:171.10px;font-size:13.5px;color:#a9a9a9;letter-spacing:0.103px;">Click here to filter your library</div>
<div class="t" id="s2" style="left:478.00px;top:171.10px;font-size:13.5px;color:#b6b6b6;letter-spacing:-0.362px;">Reset</div>
<div class="t" id="c1" style="left:120.70px;top:225.30px;font-size:13.5px;color:#444;letter-spacing:-0.233px;">Name</div>
<div class="t" id="c2" style="left:401.30px;top:225.30px;font-size:13.5px;color:#3f3fb0;">Added</div>
<div class="t" id="r0" style="left:120.60px;top:282.80px;font-size:13.5px;color:#4545b0;letter-spacing:0.144px;">Pages.png</div>
<div class="t" id="r1" style="left:120.85px;top:349.90px;font-size:13.5px;color:#4545b0;letter-spacing:0.130px;">Showspace numbers.xls</div>
<div class="t" id="r2" style="left:121.35px;top:417.00px;font-size:13.5px;color:#4545b0;letter-spacing:0.197px;">verifySignIn.png</div>
<div class="t" id="r3" style="left:121.10px;top:484.10px;font-size:13.5px;color:#4545b0;letter-spacing:0.156px;">dashboardEvents.png</div>
<div class="t" id="r4" style="left:121.10px;top:551.20px;font-size:13.5px;color:#4545b0;letter-spacing:0.297px;">dashboardMetrics.png</div>
<div class="t" id="d0" style="left:400.65px;top:282.80px;font-size:13.5px;color:#333;letter-spacing:0.355px;">29 May 2025</div>
<div class="t" id="d1" style="left:400.65px;top:349.90px;font-size:13.5px;color:#333;letter-spacing:0.355px;">28 May 2025</div>
<div class="t" id="d2" style="left:400.40px;top:417.00px;font-size:13.5px;color:#333;letter-spacing:0.335px;">15 Apr 2025</div>
<div class="t" id="d3" style="left:400.40px;top:484.10px;font-size:13.5px;color:#333;letter-spacing:0.335px;">15 Apr 2025</div>
<div class="t" id="d4" style="left:400.40px;top:551.20px;font-size:13.5px;color:#333;letter-spacing:0.335px;">15 Apr 2025</div>
<div class="t" id="b1" style="left:591.80px;top:176.10px;font-size:13.5px;color:#fff;-webkit-text-stroke:.25px #fff;letter-spacing:-0.120px;">Create</div>
<div class="t" id="b2" style="left:699.20px;top:176.10px;font-size:13.5px;color:#333;letter-spacing:-0.030px;">Design</div>
<div class="t" id="b3" style="left:1295.95px;top:176.10px;font-size:13.5px;color:#333;letter-spacing:0.050px;">View</div>
<div class="t" id="bc" style="left:578.60px;top:236.10px;font-size:13px;color:#222;letter-spacing:0.070px;">Engineering Equipment</div>
<div class="t" id="f0" style="left:626.75px;top:465.10px;font-size:13px;color:#222;letter-spacing:0.074px;">Warp drive engines</div>
<div class="t" id="f1" style="left:822.95px;top:465.10px;font-size:13px;color:#222;letter-spacing:0.062px;">Self-seal</div>
<div class="t" id="f2" style="left:1057.45px;top:465.10px;font-size:13px;color:#222;letter-spacing:0.087px;">Cloaking devices</div>
<div class="t" id="f3" style="left:1262.35px;top:465.10px;font-size:13px;color:#222;letter-spacing:0.075px;">Tractor beams</div>
<!-- menu -->
<div class="abs" style="left:876px;top:376.5px;width:252px;height:164px;background:#fff;border-radius:3px;box-shadow:0 5px 22px rgba(0,0,0,.2),0 1px 3px rgba(0,0,0,.1)"></div>
<div class="abs" style="left:876px;top:504px;width:252px;height:29.8px;background:#f2f2f2"></div>
<div class="t" id="m1" style="left:923.00px;top:393.60px;font-size:12px;color:#222;letter-spacing:0.100px;">Edit</div>
<div class="t" id="m2" style="left:923.00px;top:423.40px;font-size:12px;color:#222;letter-spacing:0.100px;">Duplicate</div>
<div class="t" id="m3" style="left:923.00px;top:453.00px;font-size:12px;color:#222;letter-spacing:0.100px;">Copy app link</div>
<div class="t" id="m4" style="left:923.00px;top:483.00px;font-size:12px;color:#222;letter-spacing:0.100px;">Delete</div>
<div class="t" id="m5" style="left:923.00px;top:505.70px;font-size:12px;color:#222;letter-spacing:0.100px;">Create new Experience from</div>
<div class="t" id="m6" style="left:923.00px;top:519.60px;font-size:12px;color:#222;letter-spacing:0.100px;">folder</div>
<svg class="abs" style="left:885px;top:385px" width="30" height="150" viewBox="885 385 30 150">
<!-- pencil -->
<g transform="translate(893 406.6) rotate(-45)"><path d="M0 0 L3.2 -1.75 H16.2 V1.75 H3.2Z" fill="#161616"/><path d="M1.1 -0.6 L3.3 -1.1 V1.1 L1.1 .6Z" fill="#fff"/><rect x="16.9" y="-1.75" width="2.9" height="3.5" rx=".6" fill="#161616"/></g>
<!-- duplicate -->
<path d="M897.6 422.4 H906 V431.4 H897.6Z" fill="none" stroke="#161616" stroke-width="1.2"/><rect x="897" y="421.8" width="9.6" height="2" fill="#161616"/><path d="M895.6 425.8 H894 V435.7 H903.2 V433.6" fill="none" stroke="#161616" stroke-width="1.2"/>
<!-- link -->
<g transform="translate(900.3 458.9) rotate(-38)" fill="none" stroke="#161616" stroke-width="1.6"><path d="M-0.6 -2.6 H-6 A2.6 2.6 0 0 0 -6 2.6 H-3.4 A2.6 2.6 0 0 0 -0.9 0.9"/><path d="M0.6 2.6 H6 A2.6 2.6 0 0 0 6 -2.6 H3.4 A2.6 2.6 0 0 0 0.9 -0.9"/></g>
<!-- trash -->
<path d="M893.8 483 H906.7" stroke="#161616" stroke-width="1.3"/><path d="M897.8 482.6 V481.6 H902.8 V482.6" fill="none" stroke="#161616" stroke-width="1.2"/><path d="M895.5 484.2 V495.7 H905 V484.2" fill="none" stroke="#161616" stroke-width="1.2"/><path d="M897.9 485.6 V494 M900.25 485.6 V494 M902.6 485.6 V494" stroke="#161616" stroke-width="1"/>
<!-- folder share -->
<path d="M892.9 514.3 L894.6 514.1 L895.6 524 L894 524.2Z" fill="#161616"/><path d="M896 513.2 Q896 512.4 896.8 512.4 H900.6 L902 514 H907 Q907.9 514 907.9 514.9 V523.6 Q907.9 524.6 906.9 524.6 H897 Q896 524.6 896 523.6Z" fill="#161616"/><path d="M899.4 522.2 C899.4 519.8 900.8 518.7 902.9 518.7 V517.2 L905.8 519.6 L902.9 522 V520.5 C901.4 520.5 900.2 520.9 899.4 522.2Z" fill="#fff"/>
</svg>
<svg class="abs" style="left:865px;top:337px" width="50" height="47" viewBox="865 337 50 47"><path fill-rule="evenodd" fill="#f4b24c" d="M872.5 341 H907.6 Q911.1 341 911.1 344.5 V376.4 Q911.1 379.9 907.6 379.9 H872.5 Q869 379.9 869 376.4 V344.5 Q869 341 872.5 341Z M875.6 347.7 V373.2 H904.3 V347.7Z"/></svg>
<!-- arrow -->
<svg class="abs" style="left:700px;top:490px;filter:drop-shadow(0 1px 1px rgba(0,0,0,.35))" width="200" height="70" viewBox="700 490 200 70"><path d="M711.2 538.3 Q711.2 536.3 713.5 536 L844.7 514 L840.4 501.8 L887.4 519.5 L845.5 546.4 L848 534.8 Q800 533 713.5 540.3 Q711.2 540.5 711.2 538.3Z" fill="#f5b34d"/></svg>

</div>
</body>
</html>
